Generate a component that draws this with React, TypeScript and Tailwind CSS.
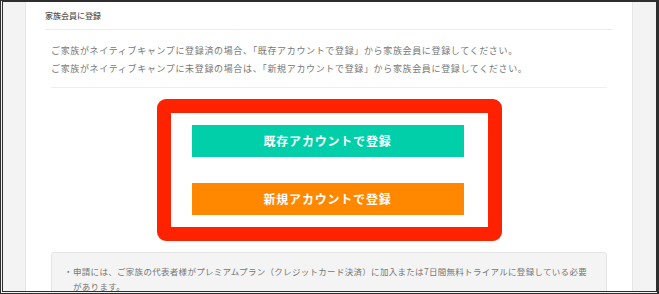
import React from 'react';

const App: React.FC = () => {
  return (
    <div
      className="w-[659px] h-[294px] overflow-hidden bg-[#f3f3f3] border-t-2 border-l-[3px] border-r-[3px] border-b-[3px] border-[#2e2e2e] [border-left-style:double] [border-bottom-style:double]"
      style={{ fontFamily: '"Noto Sans CJK JP", "Noto Sans", sans-serif' }}
    >
      <div className="ml-[22px] w-[608px] h-full bg-white border-l border-r border-[#e6e6e6]">
        <div className="mx-[19px] pt-[8px] h-[28px] border-b border-[#ececec]">
          <h2 className="text-[8px] leading-[12px] text-[#555] font-medium">家族会員に登録</h2>
        </div>

        <div className="mx-[25px]">
          <div className="pt-[12px] pb-[9px] border-b border-[#efefef] text-[9px] leading-[18px] tracking-[0.65px] text-[#777]">
            <p>ご家族がネイティブキャンプに登録済の場合、「既存アカウントで登録」から家族会員に登録してください。</p>
            <p>ご家族がネイティブキャンプに未登録の場合は、「新規アカウントで登録」から家族会員に登録してください。</p>
          </div>

          <div className="flex justify-center mt-[11px]">
            <div className="w-[345px] border-[14px] border-[#ff2200] rounded-[9px] px-[21px] py-[12px] flex flex-col gap-[26px]">
              <button className="h-[32px] w-[272px] bg-[#00cfa9] text-white text-[12px] font-bold tracking-[0.8px]">
                既存アカウントで登録
              </button>
              <button className="h-[32px] w-[272px] bg-[#ff8800] text-white text-[12px] font-bold tracking-[0.8px]">
                新規アカウントで登録
              </button>
            </div>
          </div>

          <div className="mt-[11px] h-[60px] bg-[#f4f4f4] border border-[#e4e4e4] rounded-[3px] px-[12px] pt-[11px] text-[8.5px] leading-[15px] tracking-[0.3px] text-[#777]">
            <div className="flex">
              <span className="w-[9px] shrink-0">・</span>
              <p>
                申請には、ご家族の代表者様がプレミアムプラン（クレジットカード決済）に加入または7日間無料トライアルに登録している必要
                <br />
                があります。
              </p>
            </div>
          </div>
        </div>
      </div>
    </div>
  );
};

export default App;
